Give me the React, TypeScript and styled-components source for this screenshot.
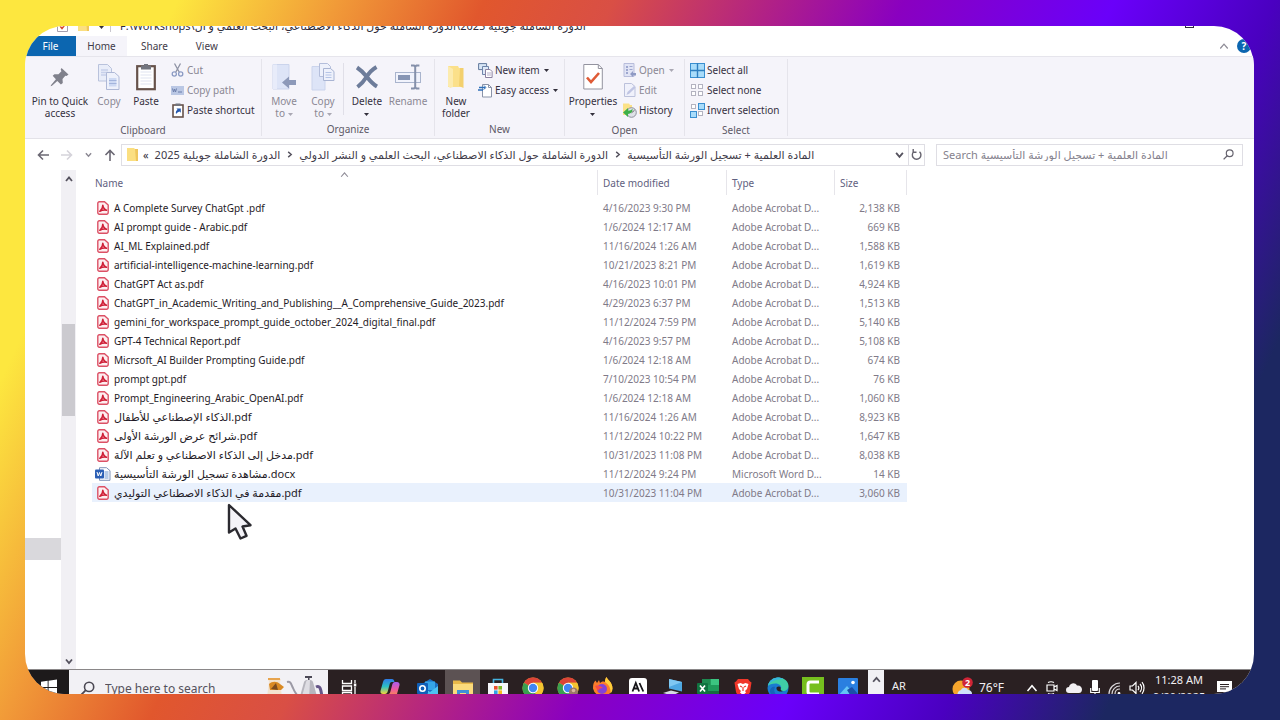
import React from 'react'
import styled, { createGlobalStyle } from 'styled-components';

type FileRow = {
  name: string,
  date: string,
  size: string,
  word?: boolean,
  arabic?: boolean,
}

const files: FileRow[] = [
  { name: 'A Complete Survey ChatGpt .pdf', date: '4/16/2023 9:30 PM', size: '2,138 KB' },
  { name: 'AI prompt guide - Arabic.pdf', date: '1/6/2024 12:17 AM', size: '669 KB' },
  { name: 'AI_ML Explained.pdf', date: '11/16/2024 1:26 AM', size: '1,588 KB' },
  { name: 'artificial-intelligence-machine-learning.pdf', date: '10/21/2023 8:21 PM', size: '1,619 KB' },
  { name: 'ChatGPT Act as.pdf', date: '4/16/2023 10:01 PM', size: '4,924 KB' },
  { name: 'ChatGPT_in_Academic_Writing_and_Publishing__A_Comprehensive_Guide_2023.pdf', date: '4/29/2023 6:37 PM', size: '1,513 KB' },
  { name: 'gemini_for_workspace_prompt_guide_october_2024_digital_final.pdf', date: '11/12/2024 7:59 PM', size: '5,140 KB' },
  { name: 'GPT-4 Technical Report.pdf', date: '4/16/2023 9:57 PM', size: '5,108 KB' },
  { name: 'Micrsoft_AI Builder Prompting Guide.pdf', date: '1/6/2024 12:18 AM', size: '674 KB' },
  { name: 'prompt gpt.pdf', date: '7/10/2023 10:54 PM', size: '76 KB' },
  { name: 'Prompt_Engineering_Arabic_OpenAI.pdf', date: '1/6/2024 12:18 AM', size: '1,060 KB' },
  { name: 'الذكاء الإصطناعي للأطفال.pdf', date: '11/16/2024 1:26 AM', size: '8,923 KB', arabic: true },
  { name: 'شرائح عرض الورشة الأولى.pdf', date: '11/12/2024 10:22 PM', size: '1,647 KB', arabic: true },
  { name: 'مدخل إلى الذكاء الاصطناعي و تعلم الآلة.pdf', date: '10/31/2023 11:08 PM', size: '8,038 KB', arabic: true },
  { name: 'مشاهدة تسجيل الورشة التأسيسية.docx', date: '11/12/2024 9:24 PM', size: '14 KB', word: true, arabic: true },
  { name: 'مقدمة في الذكاء الاصطناعي التوليدي.pdf', date: '10/31/2023 11:04 PM', size: '3,060 KB', arabic: true },
]

/* ---------- file icons ---------- */

const PdfIcon = () => (
  <svg width="12" height="14" viewBox="0 0 12 14">
    <path d="M2.300.8h5.200l3.700 3.200v7.600a1.600 1.600 0 0 1-1.600 1.600H2.300A1.500 1.500 0 0 1 .8 11.700V2.300A1.500 1.500 0 0 1 2.300.8z" fill="#fdeef0" stroke="#dc5065" strokeWidth="1.400" />
    <path d="M2.800 10.300C4.500 9 5.800 6.500 5.800 4.200c.3 2.500 1.500 4.300 3.700 5-2.500-.3-4.700 0-6.700 1.100z" fill="none" stroke="#cf2038" strokeWidth="1.500" strokeLinejoin="round" />
  </svg>
)

const WordIcon = () => (
  <svg width="16" height="14" viewBox="0 0 16 14">
    <path d="M4.500.7h7l3.500 3v9.600H4.500z" fill="#fff" stroke="#7f93b8" />
    <path d="M9.500 5h4M9.500 7h4M9.500 9h4M9.500 11h4" stroke="#5f8ccc" strokeWidth=".9" />
    <rect x="0" y="2.500" width="9" height="9" rx="1" fill="#2b5fb5" />
    <path d="M2 5l1.200 4L4.500 5.500 5.800 9 7 5" fill="none" stroke="#fff" />
  </svg>
)

const FolderIcon = () => (
  <svg width="13" height="15" viewBox="0 0 13 15">
    <path d="M1 1h7l1 1h3v12H1z" fill="#fbdf81" />
    <path d="M9 2h3v12h-2z" fill="#efc65c" />
  </svg>
)

/* ---------- ribbon icons ---------- */

const PinIcon = () => (
  <svg width="22" height="22" viewBox="0 0 22 22">
    <path d="M12.500 2l7 6.500-2 1.600-1.200-.3-2.800 3.200.3 3.900-1.900 1.500-3.600-3.500L3 19.800l-1.400.5.500-1.400 4.800-5.700L3.700 9.800 5.400 8.200l4.100.1 2.900-3.100-.7-1.600z" fill="#80818c" />
  </svg>
)

const CopyIcon = () => (
  <svg width="24" height="28" viewBox="0 0 24 28">
    <path d="M1.500 1.500h9l4 4V18h-13z" fill="#e9edf9" stroke="#b9c2dc" />
    <path d="M4 7h7M4 9.500h7M4 12h7" stroke="#c6d0ea" strokeWidth="1.500" />
    <path d="M9.500 9.500h8l4.500 4v13H9.500z" fill="#eef1fb" stroke="#aeb8d6" />
    <path d="M12 15h7.500v8.500H12z" fill="#cdd9f3" />
    <path d="M12 17.500h7.500M12 20.500h7.500" stroke="#a3b4dc" />
  </svg>
)

const PasteIcon = () => (
  <svg width="20" height="28" viewBox="0 0 20 28">
    <rect x="1.200" y="3.200" width="17.600" height="23" fill="#fff" stroke="#66524a" strokeWidth="2.200" />
    <path d="M4.500 9h11M4.500 12h11M4.500 15h11M4.500 18h11M4.500 21h11" stroke="#dfe3f0" />
    <path d="M5 2.500h3V1h4v1.500h3V6.500H5z" fill="#73757f" />
  </svg>
)

const CutIcon = () => (
  <svg width="13" height="14" viewBox="0 0 13 14">
    <path d="M3.500.5l4.800 8.800M9.500.5L4.700 9.300" stroke="#8f93a5" strokeWidth="1.300" />
    <circle cx="3.300" cy="11" r="2.100" fill="none" stroke="#8d9cc4" strokeWidth="1.300" />
    <circle cx="9.700" cy="11" r="2.100" fill="none" stroke="#8d9cc4" strokeWidth="1.300" />
  </svg>
)

const CopyPathIcon = () => (
  <svg width="13" height="9" viewBox="0 0 13 9">
    <rect width="13" height="9" fill="#bac7e4" />
    <path d="M1.500 2.500l1 3.500 1-3 1 3 1-3.500M7 6h4" stroke="#6d7fab" fill="none" />
  </svg>
)

const ShortcutIcon = () => (
  <svg width="12" height="15" viewBox="0 0 12 15">
    <rect x="1" y="2" width="10" height="12" fill="#fff" stroke="#66524a" strokeWidth="1.600" />
    <path d="M3.500 0.500h5v2.500h-5z" fill="#73757f" />
    <path d="M4 11c-.5-2 .2-3.500 1.500-4.200L4.500 5.500h4.300v4.300L7.500 8.500C6 9 5 9.800 4 11z" fill="#2558ad" />
  </svg>
)

const MoveIcon = () => (
  <svg width="26" height="28" viewBox="0 0 26 28">
    <path d="M2 1.500h16V26H2z" fill="#dde4f7" stroke="#cbd4ec" />
    <path d="M2 1.500h4V26H2z" fill="#e8ecfa" />
    <path d="M11 19.500l7-6v3.500h7v5h-7v3.500z" fill="#8d99b9" />
  </svg>
)

const CopyToIcon = () => (
  <svg width="26" height="28" viewBox="0 0 26 28">
    <path d="M2 3.500h13V27H2z" fill="#dde4f7" stroke="#cbd4ec" />
    <path d="M9.500.5h8l3 3v10h-11z" fill="#eef1fb" stroke="#b4bedb" />
    <path d="M13.500 5.500h7l3.500 3v9H13.500z" fill="#eef1fb" stroke="#a9b4d3" />
    <path d="M15.500 9.500h6M15.500 12h6M15.500 14.500h6" stroke="#b5c4e6" />
  </svg>
)

const DeleteIcon = () => (
  <svg width="26" height="26" viewBox="0 0 26 26">
    <path d="M3 3.500c3 2 6.500 5 10 9.500 3.500 4.500 6.500 7.500 10 9.500M22.500 3C18 5.500 15 9 12.500 13 10 17 7.500 20 3.500 23" fill="none" stroke="#6d7c9a" strokeWidth="4" />
  </svg>
)

const RenameIcon = () => (
  <svg width="28" height="26" viewBox="0 0 28 26">
    <rect x="1.500" y="8.500" width="25" height="10" fill="#f1f3fc" stroke="#a9b4cd" />
    <rect x="4" y="11" width="12" height="5" fill="#8795b4" />
    <path d="M17 1.500h3l1.200 1.200L22.400 1.500h3M17 24.500h3l1.200-1.200 1.200 1.200h3M21.200 2.500v21" stroke="#8590aa" strokeWidth="2" fill="none" />
  </svg>
)

const NewFolderIcon = () => (
  <svg width="20" height="28" viewBox="0 0 20 28">
    <path d="M2 3h10l1 2h4v19H2z" fill="#fbe08a" />
    <path d="M2 3l5 3v18l-3 1-2-2z" fill="#fcebae" />
    <path d="M14 5h3.500v20L13 23z" fill="#f3d06e" />
  </svg>
)

const NewItemIcon = () => (
  <svg width="15" height="15" viewBox="0 0 15 15">
    <path d="M.6.600h8v6h-8z" fill="#d8e6f6" stroke="#62799c" />
    <path d="M4.500 3.500h6v8h-6z" fill="#dfe9f7" stroke="#6f86ab" />
    <path d="M7.500 6.500h4.600l2 2V14.500H7.500z" fill="#fff" stroke="#8b81a0" />
    <path d="M9 10h4M9 12h4" stroke="#b4adc8" />
  </svg>
)

const EasyIcon = () => (
  <svg width="15" height="15" viewBox="0 0 15 15">
    <path d="M4.500 1.500h6l3 3v9.500h-9z" fill="#fff" stroke="#8a93a8" />
    <path d="M10.500 1.500v3h3" fill="none" stroke="#8a93a8" />
    <path d="M1 4.500h6M0 7h5" stroke="#2f6fb9" strokeWidth="1.500" />
    <path d="M6 2.500l2 2-2.500 2" fill="none" stroke="#2f6fb9" />
  </svg>
)

const PropertiesIcon = () => (
  <svg width="20" height="28" viewBox="0 0 20 28">
    <path d="M.8 1.500h14.500l4 4V26H.8z" fill="#fff" stroke="#93939f" />
    <path d="M15.300 1.500v4h4" fill="none" stroke="#93939f" />
    <path d="M4 14.500l4 4.500 8-9" fill="none" stroke="#df5b36" strokeWidth="2.600" />
  </svg>
)

const OpenIcon = () => (
  <svg width="14" height="14" viewBox="0 0 14 14">
    <path d="M1 .5h10v13H1z" fill="#e1e4f5" stroke="#b8bddb" />
    <path d="M3 3h2v2H3zM3 6h2v2H3zM3 9h2v2H3zM6.500 3h3v1h-3zM6.500 6h3v1h-3z" fill="#9ea7cf" />
    <path d="M7 11l3-3v2h3v2.500h-3V14z" fill="#8f9ac4" />
  </svg>
)

const EditIcon = () => (
  <svg width="14" height="14" viewBox="0 0 14 14">
    <path d="M1.500.5h7l3.500 3V13.500h-10.500z" fill="#f0f1fb" stroke="#bcc1db" />
    <path d="M3.500 12l1-3 6.500-6 1.500 1.800-6.300 6z" fill="#c0c5e3" />
  </svg>
)

const HistoryIcon = () => (
  <svg width="15" height="15" viewBox="0 0 15 15">
    <path d="M1 .5h6l1 1.500h2V12H1z" fill="#fbe187" />
    <circle cx="9.500" cy="9.500" r="4.800" fill="#dfe2e8" stroke="#8c8f9a" />
    <path d="M9.500 9.800l3-2.500" stroke="#666" />
    <path d="M1 9.500l5-4.500v2.500c3 0 4-1 4.500-1.800.3 3-1.700 5-4.500 5.300V14z" fill="#3daf49" />
  </svg>
)

const SelectIcon = ({ kind }: { kind: 'all' | 'none' | 'invert' }) => {
  const on = { fill: '#a9dcfa', stroke: '#3a8fd0' }
  const off = { fill: '#fff', stroke: '#b3b3c0' }
  if (kind === 'all') {
    return (
      <svg width="15" height="15" viewBox="0 0 15 15">
        <rect x=".5" y=".5" width="14" height="14" {...on} />
        <path d="M7.500 0v15M0 7.500h15" stroke="#2f7fc0" strokeWidth="1.400" />
      </svg>
    )
  }
  const mixed = kind === 'invert' ? on : off
  return (
    <svg width="15" height="15" viewBox="0 0 15 15">
      <rect x="1.500" y="1.500" width="4" height="4" {...off} />
      <rect x="8.500" y={kind === 'invert' ? .5 : 1.5} width={kind === 'invert' ? 6 : 4} height={kind === 'invert' ? 6 : 4} {...mixed} />
      <rect x={kind === 'invert' ? .5 : 1.5} y="8.500" width={kind === 'invert' ? 6 : 4} height={kind === 'invert' ? 6 : 4} {...mixed} />
      <rect x="8.500" y="8.500" width="4" height="4" {...off} />
    </svg>
  )
}

const Caret = ({ color = '#33303c' }: { color?: string }) => (
  <svg width="5" height="3" viewBox="0 0 5 3"><path d="M0 0h5L2.500 3z" fill={color} /></svg>
)

const Chevron = ({ dir, color = '#55525e', size = 8, weight = 1.6 }: { dir: 'up' | 'down' | 'right', color?: string, size?: number, weight?: number }) => {
  const d = { up: 'M1 6l3-3.500L7 6', down: 'M1 2.500L4 6l3-3.500', right: 'M2.500 1L6 4 2.500 7' }[dir]
  return <svg width={size} height={size} viewBox="0 0 8 8"><path d={d} fill="none" stroke={color} strokeWidth={weight} /></svg>
}

const Arrow = ({ dir, color = '#6b6873' }: { dir: 'left' | 'right' | 'up', color?: string }) => {
  const d = { left: 'M12 6H1.500M6 1.500L1.500 6 6 10.500', right: 'M0 6h10.500M6 1.500L10.500 6 6 10.500', up: 'M6 12V1.500M1.500 6L6 1.500 10.500 6' }[dir]
  return <svg width="12" height="12" viewBox="0 0 12 12"><path d={d} fill="none" stroke={color} strokeWidth="1.600" /></svg>
}

/* ---------- taskbar icons ---------- */

const Lens = ({ size, color }: { size: number, color: string }) => (
  <svg width={size} height={size} viewBox="0 0 14 14">
    <circle cx="8.500" cy="5.500" r="4.300" fill="none" stroke={color} strokeWidth="1.500" />
    <path d="M5.400 8.600L.8 13.200" stroke={color} strokeWidth="1.700" />
  </svg>
)

const WindowsLogo = () => (
  <svg width="16" height="17" viewBox="0 0 18 18">
    <path d="M0 2.500l7.500-1v7H0zM8.500 1.300L18 0v8.500H8.500zM0 9.500h7.500v7L0 15.500zM8.500 9.500H18V18l-9.500-1.300z" fill="#fff" />
  </svg>
)

const Teapot = () => (
  <svg width="60" height="26" viewBox="0 0 60 26">
    <path d="M2 4h13l-1 3 2 15H1L3 7z" fill="#f3e3cf" />
    <path d="M3 9c3-3 8-3 11 0l4 3-3 3H4z" fill="#d98a24" />
    <path d="M5 14l5-6 2 7z" fill="#7b4b1e" />
    <path d="M2 3h12v2H2z" fill="#e7a44e" />
    <path d="M0 19h16v5H0z" fill="#b34b58" />
    <path d="M21 7c4-1 4 2 6 6 2 5 4 8 8 10" fill="none" stroke="#9c9aa5" strokeWidth="2" />
    <path d="M38 7c1-3 8-3 9 0l5 18H33z" fill="#b6b5bd" />
    <path d="M40 7c.5-2 3-2.500 4-2l-1 20h-8z" fill="#dedde3" />
    <path d="M39 1h7v2h-7zM42 3h1.500v2H42z" fill="#4b4956" />
    <path d="M50 12c4-2 5 2 6 10" fill="none" stroke="#645587" strokeWidth="3" />
  </svg>
)

const TaskViewIcon = () => (
  <svg width="16" height="18" viewBox="0 0 16 18">
    <path d="M1.500 1v3.500h9V1M1.500 17v-3.500h9V17M1.500 7h9v4.500h-9zM14 1v3M14 8v9" fill="none" stroke="#fff" strokeWidth="1.300" />
    <rect x="12.800" y="4.500" width="2.500" height="3" fill="#fff" />
  </svg>
)

const CopilotIcon = () => (
  <svg width="20" height="20" viewBox="0 0 20 20">
    <defs>
      <linearGradient id="cpa" x1="0" y1="0" x2="0" y2="1"><stop offset="0" stopColor="#2f7be8" /><stop offset=".5" stopColor="#2cc0c4" /><stop offset="1" stopColor="#f5d53a" /></linearGradient>
      <linearGradient id="cpb" x1="0" y1="0" x2="0" y2="1"><stop offset="0" stopColor="#a95cf0" /><stop offset=".5" stopColor="#ef5a9e" /><stop offset="1" stopColor="#fb9a3b" /></linearGradient>
    </defs>
    <path d="M6 1h6c1.500 0 2 1 2.500 3h-2.800c-1 0-1.700.8-2 2l-2 7.500C7.300 15 6.500 16 5 16H3C1 16 0 14.500.600 12.500L3 4c.5-1.800 1.500-3 3-3z" fill="url(#cpa)" />
    <path d="M14 19H8c-1.500 0-2-1-2.500-3h2.800c1 0 1.700-.8 2-2l2-7.500C12.700 5 13.500 4 15 4h2c2 0 3 1.500 2.400 3.500L17 16c-.5 1.800-1.500 3-3 3z" fill="url(#cpb)" />
  </svg>
)

const OutlookIcon = () => (
  <svg width="22" height="20" viewBox="0 0 22 20">
    <path d="M5 6l8-5 8 5v13H5z" fill="#1b6fc4" />
    <path d="M8 3.500h10V12H8z" fill="#35a5e8" />
    <path d="M5 9l8 5 8-6v11H5z" fill="#4cc2f4" />
    <rect x="0" y="5" width="11" height="11" rx="1" fill="#0f5fb8" />
    <circle cx="5.500" cy="10.500" r="2.700" fill="none" stroke="#fff" strokeWidth="1.600" />
  </svg>
)

const ExplorerIcon = () => (
  <svg width="20" height="18" viewBox="0 0 20 18">
    <path d="M0 1.500h7l2 2h11V17H0z" fill="#e9b949" />
    <path d="M0 5h20v12H0z" fill="#fbdb7c" />
    <path d="M4 17v-6h12v6h-3v-3H7v3z" fill="#3f8fd8" />
  </svg>
)

const StoreIcon = () => (
  <svg width="20" height="20" viewBox="0 0 20 20">
    <path d="M5.500 5V1.500h9V5" fill="none" stroke="#45b3e0" strokeWidth="1.600" />
    <path d="M0 5h20v12a2 2 0 0 1-2 2H2a2 2 0 0 1-2-2z" fill="#f6f6fa" />
    <path d="M6 8h3.600v3.600H6z" fill="#ea4f2d" /><path d="M10.400 8H14v3.600h-3.600z" fill="#7eb826" />
    <path d="M6 12.400h3.600V16H6z" fill="#2fa2e6" /><path d="M10.400 12.400H14V16h-3.600z" fill="#f7b81c" />
  </svg>
)

const ChromeIcon = ({ badge }: { badge?: boolean }) => (
  <svg width="22" height="22" viewBox="0 0 22 22">
    <circle cx="11" cy="11" r="10.500" fill="#e7bd2f" />
    <path d="M11 11L1.900 5.700A10.500 10.500 0 0 1 20.100 5.800H11z" fill="#dc4437" />
    <path d="M11 11L1.900 5.700A10.500 10.500 0 0 0 10.500 21.500l5-8z" fill="#3a9f50" />
    <path d="M11 5.800h9.100A10.500 10.500 0 0 1 10.500 21.500L15.500 13z" fill="#f4c430" />
    <circle cx="11" cy="11" r="5.200" fill="#fff" /><circle cx="11" cy="11" r="4.200" fill="#4285f4" />
    {badge && <><circle cx="16.500" cy="15" r="4.500" fill="#9b7868" /><circle cx="16.500" cy="13.500" r="1.800" fill="#d9b59e" /></>}
  </svg>
)

const FirefoxIcon = () => (
  <svg width="21" height="22" viewBox="0 0 21 22">
    <path d="M1 11C1 7 2 5 3.500 3.500L5 6l2-3 1 3c1-1 3-2 5-1 0-2 .5-4 1.500-5 1 3 6 5 6 11.500a10 10 0 0 1-19.500 0z" fill="#fb7c2b" />
    <path d="M14.500 0c1 3 6 5 6 11.500 0 2-1 4-2 5C19 11 17 8 13 5c0-2 .5-4 1.500-5z" fill="#fdcf3a" />
    <circle cx="10" cy="12" r="5" fill="#8342d8" />
    <path d="M3 9c3-1 6 0 8 2-3 0-4 1-5 3z" fill="#f94a4a" />
  </svg>
)

const AnthropicIcon = () => (
  <svg width="18" height="20" viewBox="0 0 18 20">
    <rect width="18" height="20" rx="3" fill="#fff" />
    <path d="M3.500 13.500l3.300-8.500 3.300 8.500M4.800 10.500h4M10.500 5l3.800 8.500" fill="none" stroke="#161418" strokeWidth="1.800" />
  </svg>
)

const RemoteIcon = () => (
  <svg width="20" height="20" viewBox="0 0 20 20">
    <path d="M6 1l13 3v9.500L6 10.500z" fill="#4ea8e2" /><path d="M6 1l13 3-13 5z" fill="#7fc8f2" />
    <path d="M0 15l8-2.500 8 2-7 3z" fill="#d6dae3" />
  </svg>
)

const ExcelIcon = () => (
  <svg width="22" height="20" viewBox="0 0 22 20">
    <rect x="5" y="1" width="17" height="18" fill="#1f9a5b" /><path d="M13.500 1H22v6h-8.500z" fill="#3cc481" /><path d="M5 1h8.500v6H5z" fill="#1d8a50" /><path d="M5 13h17v6H5z" fill="#166b3e" />
    <rect x="0" y="5" width="11" height="11" rx="1" fill="#107340" />
    <path d="M3 7.500l5 6M8 7.500l-5 6" stroke="#fff" strokeWidth="1.700" />
  </svg>
)

const BraveIcon = () => (
  <svg width="18" height="21" viewBox="0 0 18 21">
    <path d="M4 1h10l2 2.500 1.500 1L16 14c-.7 3-5 5.500-7 6.500-2-1-6.300-3.500-7-6.500L.5 4.500l1.500-1z" fill="#f0372a" />
    <path d="M3.500 6l3-1L9 6l2.500-1 3 1-1.500 5-2 2 1 1.500L9 17l-3-2.500 1-1.500-2-2z" fill="#fff" />
    <path d="M6 8l2 1M12 8l-2 1M9 9v4" stroke="#f0372a" strokeWidth="1.200" />
  </svg>
)

const EdgeIcon = () => (
  <svg width="22" height="22" viewBox="0 0 22 22">
    <circle cx="11" cy="11" r="10.500" fill="#1a7bd0" />
    <path d="M.8 9C2 4 6 .5 11 .5c6 0 10.500 4 10.500 8.500 0 3-2.500 5-5.500 5-2 0-3-1-2-2.500C15 9 12 6.500 8.500 6.500 5 6.500 2 7.500.8 9z" fill="#3fcfa6" />
    <path d="M.8 9C2 4 6 .5 11 .5c2 0 4 .5 5.500 1.500C10 2 3 4 .8 9z" fill="#37b6dc" />
    <path d="M9.500 10.500c1.500-1.500 4-1 4.300.5-.8 1.500.2 3 2.200 3-3 1.500-7 0-6.500-3.500z" fill="#2a2022" />
    <path d="M8 10c-2 4 0 9 6 10-5 2-11-1-11-6 0-3 3-5 5-4z" fill="#1565b8" />
  </svg>
)

const CamtasiaIcon = () => (
  <svg width="22" height="22" viewBox="0 0 22 22">
    <rect width="22" height="22" fill="#76bf1e" />
    <path d="M17 5H8.500C7 5 6 6 6 7.500v7C6 16 7 17 8.500 17H17" fill="none" stroke="#fff" strokeWidth="3" />
  </svg>
)

const PhotosIcon = () => (
  <svg width="20" height="20" viewBox="0 0 20 20">
    <rect width="20" height="20" rx="1" fill="#2a7fe0" /><path d="M0 18L9 8l11 12H0z" fill="#64c4f5" /><path d="M9 12l5-3 6 7v4h-6z" fill="#1b4fa8" /><circle cx="15" cy="4.500" r="1.800" fill="#fff" />
  </svg>
)

const WeatherIcon = () => (
  <svg width="22" height="22" viewBox="0 0 22 22">
    <circle cx="9" cy="12" r="8.500" fill="#f6a52c" />
    <path d="M7 20a4 4 0 0 1 2-7c1-3 6-3 7 0 4 0 5 4 3 7z" fill="#cfe0fa" />
    <circle cx="15.500" cy="5.500" r="5.300" fill="#cf2436" />
    <text x="15.500" y="9" fontSize="9" fontWeight="700" textAnchor="middle" fill="#fff">2</text>
  </svg>
)

const MeetIcon = () => (
  <svg width="12" height="14" viewBox="0 0 12 14">
    <path d="M1 4h7v6H1zM8 6l3-1.500v5L8 8M2 1.500c2-1 4-1 6 0M2 12.500c2 1 4 1 6 0" fill="none" stroke="#fff" strokeWidth="1.200" />
  </svg>
)

const CloudIcon = () => (
  <svg width="16" height="10" viewBox="0 0 16 10">
    <path d="M3 10a3 3 0 0 1 0-6c1-4 6-5 8-1.500 3-.5 5 1.500 5 4S14.500 10 13 10z" fill="#f2f0f3" />
  </svg>
)

const MicIcon = () => (
  <svg width="10" height="16" viewBox="0 0 10 16">
    <rect x="2" y="0" width="6" height="11" rx="1" fill="#fff" /><path d="M.7 8v4.500h8.600V8M5 12v3" fill="none" stroke="#fff" strokeWidth="1.200" />
  </svg>
)

const WifiIcon = () => (
  <svg width="13" height="13" viewBox="0 0 13 13">
    <path d="M1 12C1 6 6 1 12 1M4 12c0-4.500 3.500-8 8-8M7 12c0-3 2-5 5-5" fill="none" stroke="#d9d6da" strokeWidth="1.200" /><circle cx="11" cy="11.500" r="1.400" fill="#fff" />
  </svg>
)

const SpeakerIcon = () => (
  <svg width="16" height="14" viewBox="0 0 16 14">
    <path d="M1 5h2.500L7 1.500v11L3.500 9H1zM9 5c1 1.200 1 2.800 0 4M11 3c2 2.300 2 5.700 0 8M13 1.200c2.700 3.300 2.700 8.300 0 11.600" fill="none" stroke="#fff" strokeWidth="1.200" />
  </svg>
)

const NoteIcon = () => (
  <svg width="15" height="15" viewBox="0 0 15 15">
    <path d="M0 0h15v11h-3v3.500L8.500 11H0z" fill="#fff" /><path d="M3 3.500h9M3 5.700h9M3 7.900h6" stroke="#2a2022" />
  </svg>
)

const pinned = [
  { title: 'Outlook', icon: <OutlookIcon /> },
  { title: 'File Explorer', icon: <ExplorerIcon />, active: true },
  { title: 'Microsoft Store', icon: <StoreIcon /> },
  { title: 'Chrome', icon: <ChromeIcon /> },
  { title: 'Chrome profile', icon: <ChromeIcon badge /> },
  { title: 'Firefox', icon: <FirefoxIcon /> },
  { title: 'Claude', icon: <AnthropicIcon /> },
  { title: 'Remote desktop', icon: <RemoteIcon /> },
  { title: 'Excel', icon: <ExcelIcon /> },
  { title: 'Brave', icon: <BraveIcon /> },
  { title: 'Edge', icon: <EdgeIcon /> },
  { title: 'Camtasia', icon: <CamtasiaIcon /> },
  { title: 'Photos', icon: <PhotosIcon /> },
]

const App = () => {
  return (
    <PageStyle>
      <GlobalStyle />
      <WindowStyle>
        <TitleBar>
          <svg width="11" height="12" viewBox="0 0 11 12"><path d="M.5.5h10v11H.5z" fill="#fff" stroke="#a59fae" /><path d="M3 6l2 2.500L8.500 4" fill="none" stroke="#d4452f" strokeWidth="1.500" /></svg>
          <FolderIcon />
          <TitleCaret><Caret /></TitleCaret>
          <TitleText>{'F:\\Workshops\\الدورة الشاملة جويلية 2025\\الدورة الشاملة حول الذكاء الاصطناعي، البحث العلمي و ال'}</TitleText>
          <MaxButton aria-label="Maximize" />
        </TitleBar>

        <TabBar>
          <TabButton $kind="file">File</TabButton>
          <TabButton $kind="active">Home</TabButton>
          <TabButton>Share</TabButton>
          <TabButton>View</TabButton>
          <TabTools>
            <IconButton aria-label="Collapse ribbon"><Chevron dir="up" color="#8f8c97" size={10} weight={1} /></IconButton>
            <HelpButton aria-label="Help">?</HelpButton>
          </TabTools>
        </TabBar>

        <Ribbon>
          <Group $w={237}>
            <GroupBody>
              <BigButton $w={70}><PinIcon /><span>Pin to Quick<br />access</span></BigButton>
              <BigButton $w={28} $off><CopyIcon /><span>Copy</span></BigButton>
              <BigButton $w={46}><PasteIcon /><span>Paste</span></BigButton>
              <SmallColumn>
                <SmallButton $off><IconSlot><CutIcon /></IconSlot>Cut</SmallButton>
                <SmallButton $off><IconSlot><CopyPathIcon /></IconSlot>Copy path</SmallButton>
                <SmallButton><IconSlot><ShortcutIcon /></IconSlot>Paste shortcut</SmallButton>
              </SmallColumn>
            </GroupBody>
            <GroupLabel>Clipboard</GroupLabel>
          </Group>
          <Group $w={173}>
            <GroupBody>
              <BigButton $w={44} $off><MoveIcon /><span>Move<br />to <Caret color="#aaa8b3" /></span></BigButton>
              <BigButton $w={34} $off><CopyToIcon /><span>Copy<br />to <Caret color="#aaa8b3" /></span></BigButton>
              <Split />
              <BigButton $w={40}><DeleteIcon /><span>Delete<br /><Caret /></span></BigButton>
              <BigButton $w={42} $off><RenameIcon /><span>Rename</span></BigButton>
            </GroupBody>
            <GroupLabel>Organize</GroupLabel>
          </Group>
          <Group $w={130}>
            <GroupBody>
              <BigButton $w={42}><NewFolderIcon /><span>New<br />folder</span></BigButton>
              <SmallColumn>
                <SmallButton><IconSlot><NewItemIcon /></IconSlot>New item<Caret /></SmallButton>
                <SmallButton><IconSlot><EasyIcon /></IconSlot>Easy access<Caret /></SmallButton>
              </SmallColumn>
            </GroupBody>
            <GroupLabel>New</GroupLabel>
          </Group>
          <Group $w={120}>
            <GroupBody>
              <BigButton $w={56}><PropertiesIcon /><span>Properties<br /><Caret /></span></BigButton>
              <SmallColumn>
                <SmallButton $off><IconSlot><OpenIcon /></IconSlot>Open<Caret color="#aaa8b3" /></SmallButton>
                <SmallButton $off><IconSlot><EditIcon /></IconSlot>Edit</SmallButton>
                <SmallButton><IconSlot><HistoryIcon /></IconSlot>History</SmallButton>
              </SmallColumn>
            </GroupBody>
            <GroupLabel>Open</GroupLabel>
          </Group>
          <Group $w={103}>
            <GroupBody>
              <SmallColumn $pad={5}>
                <SmallButton><IconSlot><SelectIcon kind="all" /></IconSlot>Select all</SmallButton>
                <SmallButton><IconSlot><SelectIcon kind="none" /></IconSlot>Select none</SmallButton>
                <SmallButton><IconSlot><SelectIcon kind="invert" /></IconSlot>Invert selection</SmallButton>
              </SmallColumn>
            </GroupBody>
            <GroupLabel>Select</GroupLabel>
          </Group>
        </Ribbon>

        <AddressRow>
          <NavButtons>
            <IconButton aria-label="Back"><Arrow dir="left" /></IconButton>
            <IconButton aria-label="Forward"><Arrow dir="right" color="#d5d3da" /></IconButton>
            <IconButton aria-label="Recent locations"><Chevron dir="down" color="#8b8893" size={7} /></IconButton>
            <IconButton aria-label="Up"><Arrow dir="up" /></IconButton>
          </NavButtons>
          <AddressBox>
            <FolderIcon />
            <Crumbs>
              <span>«</span>
              <a href="#root">الدورة الشاملة جويلية 2025</a>
              <Chevron dir="right" size={7} />
              <a href="#course">الدورة الشاملة حول الذكاء الاصطناعي، البحث العلمي و النشر الدولي</a>
              <Chevron dir="right" size={7} />
              <a href="#material">المادة العلمية + تسجيل الورشة التأسيسية</a>
            </Crumbs>
            <IconButton aria-label="Previous locations"><Chevron dir="down" size={9} /></IconButton>
            <RefreshButton aria-label="Refresh">
              <svg width="11" height="12" viewBox="0 0 11 12"><path d="M8.500 2.700A4.300 4.300 0 1 1 3 2.500M2.200 0v3.200H5.500" fill="none" stroke="#66636e" strokeWidth="1.400" /></svg>
            </RefreshButton>
          </AddressBox>
          <SearchBox>
            <input aria-label="Search folder" placeholder="Search المادة العلمية + تسجيل الورشة التأسيسية" />
            <Lens size={11} color="#66636e" />
          </SearchBox>
        </AddressRow>

        <MainArea>
          <NavPane><NavItem /></NavPane>
          <ScrollBar>
            <Chevron dir="up" weight={1.800} />
            <ScrollTrack><ScrollThumb /></ScrollTrack>
            <Chevron dir="down" weight={1.800} />
          </ScrollBar>
          <FileTable>
            <colgroup>
              <NameCol />
              <DateCol />
              <TypeCol />
              <SizeCol />
            </colgroup>
            <thead>
              <tr>
                <th>Name<SortMark><Chevron dir="up" color="#8f8c97" size={9} weight={1} /></SortMark></th>
                <th>Date modified</th>
                <th>Type</th>
                <th>Size</th>
              </tr>
            </thead>
            <tbody>
              {files.map((file, index) => (
                <RowStyle key={file.name} $hover={index === files.length - 1}>
                  <td><NameCell $arabic={file.arabic}><IconSlot>{file.word ? <WordIcon /> : <PdfIcon />}</IconSlot>{file.name}</NameCell></td>
                  <td>{file.date}</td>
                  <td>{file.word ? 'Microsoft Word D...' : 'Adobe Acrobat D...'}</td>
                  <td>{file.size}</td>
                </RowStyle>
              ))}
            </tbody>
          </FileTable>
        </MainArea>

        <TaskBar>
          <TaskInner>
            <StartButton aria-label="Start"><WindowsLogo /></StartButton>
            <TaskSearch>
              <Lens size={15} color="#4b4853" />
              <input aria-label="Search Windows" placeholder="Type here to search" />
              <Teapot />
            </TaskSearch>
            <TaskButton $w={42} aria-label="Task view"><TaskViewIcon /></TaskButton>
            <TaskButton $w={40} aria-label="Copilot"><CopilotIcon /></TaskButton>
            {pinned.map(app => (
              <TaskButton key={app.title} $active={app.active} aria-label={app.title}>{app.icon}</TaskButton>
            ))}
            <TaskScroll aria-label="Scroll up"><Chevron dir="up" size={9} /></TaskScroll>
            <Language>AR</Language>
            <Tray>
              <Weather><WeatherIcon />76°F</Weather>
              <Chevron dir="up" color="#fff" size={12} weight={1} />
              <MeetIcon />
              <CloudIcon />
              <MicIcon />
              <WifiIcon />
              <SpeakerIcon />
              <Clock>11:28 AM<br />9/20/2025</Clock>
              <NoteIcon />
            </Tray>
          </TaskInner>
        </TaskBar>
      </WindowStyle>
      <Pointer>
        <svg width="28" height="40" viewBox="0 0 28 40">
          <path d="M3 4v27.500l6.500-4L14.500 37.500 20.500 34.800 16.500 25.500 24.500 24.200z" fill="#f4f3f8" stroke="#2b2a30" strokeWidth="2.400" strokeLinejoin="round" />
        </svg>
      </Pointer>
    </PageStyle>
  )
}

const GlobalStyle = createGlobalStyle`
  * {
    box-sizing: border-box;
  }
  body {
    margin: 0;
    font-family: "Noto Sans", "DejaVu Sans", sans-serif;
    font-size: 10px;
    line-height: 12px;
    color: #2f2b38;
  }
  button, input {
    font: inherit;
    color: inherit;
    border: none;
    background: none;
    padding: 0;
    margin: 0;
  }
  svg {
    flex: none;
  }
`

const PageStyle = styled.div`
  position: relative;
  display: flex;
  height: 100vh;
  padding: 26px 26px 26px 25px;
  background: linear-gradient(115deg, #fde73f 11%, #f19a38 21%, #e1572d 30%, #d94f45 38%, #b02088 48%, #8a00c0 56%, #6a00fa 69%, #4a00c0 79%, #1c2761 89%);
`

const WindowStyle = styled.div`
  flex: 1;
  min-width: 0;
  display: flex;
  flex-direction: column;
  overflow: hidden;
  border-radius: 40px;
  background-color: #fff;
`

const TitleBar = styled.div`
  height: 10px;
  padding: 0 60px 4px 32px;
  display: flex;
  align-items: flex-end;
  gap: 9px;
`

const TitleCaret = styled.span`
  display: flex;
  padding: 0 6px 3px 0;
  border-right: 1px solid #c9c7cf;
`

const TitleText = styled.span`
  flex: 1;
  white-space: nowrap;
  font-size: 11px;
`

const MaxButton = styled.button`
  width: 9px;
  height: 9px;
  margin-bottom: 4px;
  border: 1px solid #2f2b38;
`

const TabBar = styled.div`
  display: flex;
  height: 20px;
`

const TabButton = styled.button<{ $kind?: 'file' | 'active' }>`
  width: ${p => p.$kind ? '51px' : 'auto'};
  padding: 0 ${p => p.$kind ? 0 : 14}px;
  color: ${p => p.$kind === 'file' ? '#fff' : '#3f3b49'};
  background-color: ${p => p.$kind === 'file' ? '#0c66b0' : p.$kind === 'active' ? '#f5f4fa' : 'transparent'};
`

const TabTools = styled.div`
  flex: 1;
  display: flex;
  align-items: center;
  justify-content: flex-end;
  gap: 8px;
  padding-right: 3px;
`

const IconButton = styled.button`
  display: flex;
  align-items: center;
  justify-content: center;
`

const HelpButton = styled.button`
  width: 14px;
  height: 14px;
  border-radius: 50%;
  background-color: #0c66b0;
  color: #fff;
  font-weight: 700;
`

const Ribbon = styled.div`
  display: flex;
  height: 83px;
  background-color: #f5f4fa;
  border-top: 1px solid #e6e5ec;
  border-bottom: 1px solid #e3e2e8;
`

const Group = styled.div<{ $w: number }>`
  min-width: ${p => p.$w}px;
  display: flex;
  flex-direction: column;
  margin: 2px 0;
  border-right: 1px solid #e5e4eb;
`

const GroupBody = styled.div`
  display: flex;
  height: 62px;
`

const GroupLabel = styled.div`
  text-align: center;
  color: #5d5966;
  line-height: 20px;
  height: 17px;
`

const BigButton = styled.button<{ $w: number, $off?: boolean }>`
  width: ${p => p.$w}px;
  display: flex;
  flex-direction: column;
  align-items: center;
  white-space: nowrap;
  color: ${p => p.$off ? '#8b8894' : '#35313f'};
  > svg {
    height: 36px;
  }
  span svg {
    vertical-align: middle;
  }
`

const SmallColumn = styled.div<{ $pad?: number }>`
  display: flex;
  flex-direction: column;
  padding-left: ${p => p.$pad || 1}px;
  padding-top: 1px;
`

const SmallButton = styled.button<{ $off?: boolean }>`
  height: 20px;
  display: flex;
  align-items: center;
  gap: 2px;
  white-space: nowrap;
  color: ${p => p.$off ? '#8b8894' : '#35313f'};
  > svg {
    margin-left: 2px;
  }
`

const IconSlot = styled.span`
  width: 15px;
  flex: none;
  display: flex;
  justify-content: center;
`

const Split = styled.div`
  width: 1px;
  margin: 4px 3px;
  background-color: #e0dfe8;
`

const AddressRow = styled.div`
  display: flex;
  align-items: center;
  height: 31px;
  padding-right: 11px;
  font-size: 11px;
`

const NavButtons = styled.div`
  display: flex;
  gap: 12px;
  width: 96px;
  padding-left: 12px;
`

const AddressBox = styled.div`
  flex: 798;
  min-width: 0;
  height: 22px;
  display: flex;
  align-items: center;
  gap: 4px;
  padding-left: 4px;
  border: 1px solid #dfdee4;
`

const Crumbs = styled.div`
  flex: 1;
  min-width: 0;
  display: flex;
  align-items: center;
  gap: 6px;
  white-space: nowrap;
  a {
    color: #3f3b49;
    text-decoration: none;
  }
`

const RefreshButton = styled(IconButton)`
  width: 16px;
  height: 20px;
  border-left: 1px solid #dfdee4;
`

const SearchBox = styled.label`
  flex: 291;
  height: 22px;
  margin-left: 11px;
  padding: 0 8px 0 6px;
  display: flex;
  align-items: center;
  border: 1px solid #dfdee4;
  input {
    flex: 1;
    min-width: 0;
    outline: none;
  }
  input::placeholder {
    color: #85828d;
  }
`

const MainArea = styled.div`
  flex: 1;
  min-height: 0;
  display: flex;
`

const NavPane = styled.div`
  width: 36px;
  display: flex;
  flex-direction: column;
  justify-content: flex-end;
  padding-bottom: 109px;
`

const NavItem = styled.div`
  height: 22px;
  background-color: #d9d8dc;
`

const ScrollBar = styled.div`
  width: 15px;
  display: flex;
  flex-direction: column;
  align-items: center;
  padding: 5px 0 4px;
  background-color: #f1f0f4;
`

const ScrollTrack = styled.div`
  flex: 1;
  align-self: stretch;
  display: flex;
  flex-direction: column;
  padding: 141px 1px 0;
`

const ScrollThumb = styled.div`
  height: 92px;
  background-color: #cbcacf;
`

const FileTable = styled.table`
  table-layout: fixed;
  width: 815px;
  align-self: flex-start;
  margin-left: 16px;
  border-collapse: separate;
  border-spacing: 0;
  th {
    position: relative;
    height: 25px;
    padding: 0 0 0 5px;
    text-align: left;
    font-weight: 400;
    color: #5f6180;
    border-right: 1px solid #e6e5ea;
  }
  th:first-child {
    padding-left: 3px;
  }
  thead::after {
    content: '';
    display: block;
    height: 3px;
  }
`

const NameCol = styled.col`
  width: 506px;
`

const DateCol = styled.col`
  width: 129px;
`

const TypeCol = styled.col`
  width: 108px;
`

const SizeCol = styled.col`
  width: 72px;
`

const SortMark = styled.span`
  position: absolute;
  left: 50%;
  top: -1px;
  margin-left: -5px;
`

const RowStyle = styled.tr<{ $hover?: boolean }>`
  background-color: ${p => p.$hover ? '#e9f1fd' : 'transparent'};
  td {
    height: 19px;
    padding: 0 0 0 5px;
    white-space: nowrap;
    color: #807a88;
  }
  td:first-child {
    padding-left: 3px;
    color: #1f1b27;
  }
  td:last-child {
    padding-right: 7px;
    text-align: right;
  }
`

const NameCell = styled.div<{ $arabic?: boolean }>`
  display: flex;
  align-items: center;
  gap: 4px;
  font-size: ${p => p.$arabic ? 11 : 10}px;
`

const TaskBar = styled.div`
  height: 25px;
  flex: none;
  overflow: hidden;
  background-color: #2a2022;
  border-top: 1px solid #8a8788;
`

const TaskInner = styled.div`
  height: 36px;
  display: flex;
  color: #f1eff2;
`

const StartButton = styled.button`
  width: 44px;
  padding-left: 3px;
  background-color: #1d1a1b;
`

const TaskSearch = styled.label`
  width: 259px;
  display: flex;
  align-items: center;
  gap: 10px;
  padding: 0 2px 0 11px;
  background-color: #f2f1f5;
  font-size: 12px;
  input {
    flex: 1;
    min-width: 0;
  }
  input::placeholder {
    color: #55525c;
  }
`

const TaskButton = styled.button<{ $w?: number, $active?: boolean }>`
  width: ${p => p.$w || 35}px;
  display: flex;
  align-items: center;
  justify-content: center;
  background-color: ${p => p.$active ? '#5c5253' : 'transparent'};
`

const TaskScroll = styled.button`
  width: 16px;
  margin-left: 3px;
  padding-bottom: 16px;
  background-color: #f2f1f5;
`

const Language = styled.span`
  padding-left: 8px;
  line-height: 32px;
  font-size: 11px;
`

const Tray = styled.div`
  flex: 1;
  display: flex;
  align-items: center;
  justify-content: flex-end;
  gap: 8px;
  padding-right: 22px;
  font-size: 11px;
`

const Weather = styled.span`
  display: flex;
  align-items: center;
  gap: 5px;
  margin-right: 14px;
  font-size: 12px;
`

const Clock = styled.span`
  width: 52px;
  text-align: center;
  line-height: 17px;
  margin-right: 4px;
`

const Pointer = styled.div`
  position: absolute;
  left: 226px;
  top: 501px;
  pointer-events: none;
`

export default App
